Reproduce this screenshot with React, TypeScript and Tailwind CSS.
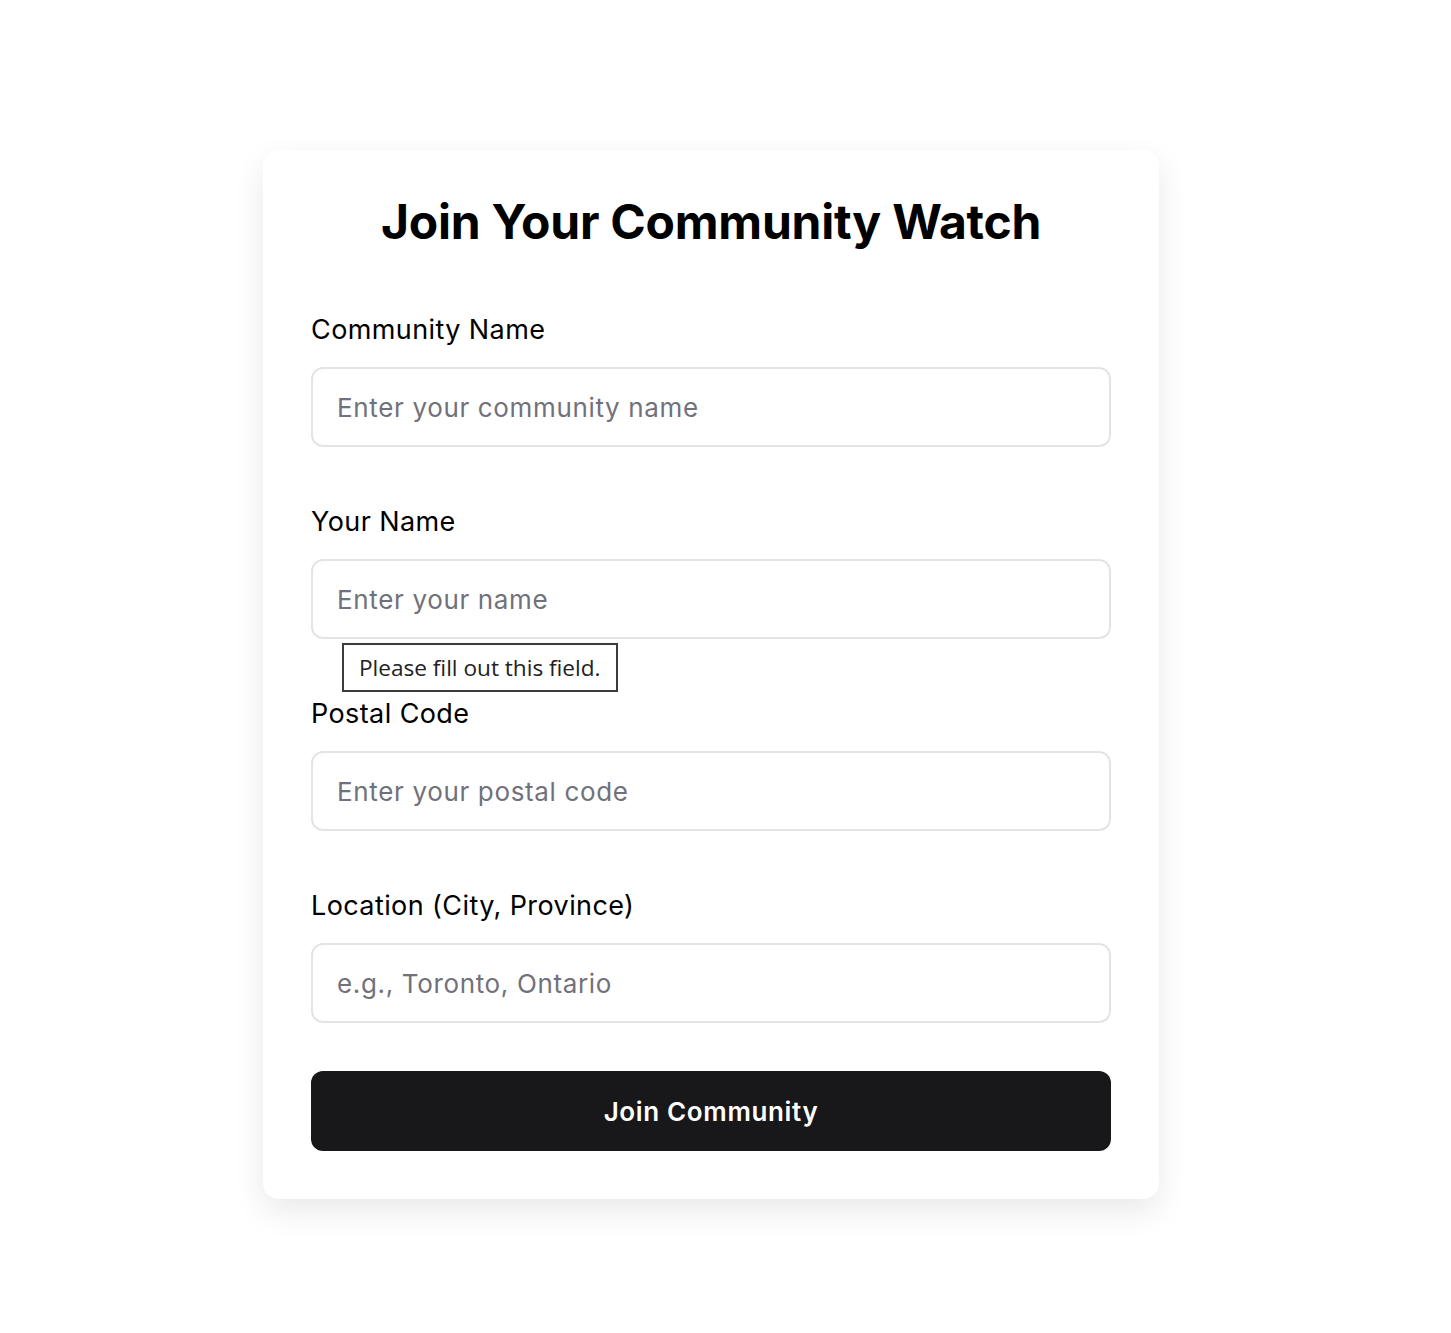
import { useState } from "react"

const fields = [
  { id: "community", label: "Community Name", placeholder: "Enter your community name" },
  { id: "name", label: "Your Name", placeholder: "Enter your name", invalid: true },
  { id: "postal", label: "Postal Code", placeholder: "Enter your postal code" },
  { id: "location", label: "Location (City, Province)", placeholder: "e.g., Toronto, Ontario" },
]

export default function App() {
  const [values, setValues] = useState<Record<string, string>>({})

  return (
    <div className="min-h-[1333px] bg-white pl-[263px] pt-[150px] font-['Inter',sans-serif]">
      <div className="w-[896px] rounded-2xl bg-white p-12 shadow-[0_12px_32px_rgba(0,0,0,0.09)]">
        <h1 className="text-center text-5xl leading-[48px] font-bold tracking-[-0.005em] text-black">
          Join Your Community Watch
        </h1>

        <form className="mt-[68px] flex flex-col" onSubmit={(e) => e.preventDefault()}>
          {fields.map((f) => (
            <div key={f.id} className="relative mb-[59px] flex flex-col">
              <label
                htmlFor={f.id}
                className="mb-[21px] text-[27px] leading-8 font-normal tracking-[0.015em] text-black"
              >
                {f.label}
              </label>
              <input
                id={f.id}
                value={values[f.id] ?? ""}
                onChange={(e) => setValues({ ...values, [f.id]: e.target.value })}
                placeholder={f.placeholder}
                className="h-20 w-full rounded-xl border-2 border-zinc-200 bg-white px-6 text-[26px] tracking-[0.025em] text-black outline-none placeholder:text-zinc-500"
              />
              {f.invalid && (
                <div className="absolute top-[calc(100%+4px)] left-[31px] z-10 border-2 border-[#3c3c3c] bg-white px-[15px] py-[7px] font-['Open_Sans',sans-serif] text-[22.6px] leading-[31px] text-[#222]">
                  Please fill out this field.
                </div>
              )}
            </div>
          ))}

          <button
            type="submit"
            className="-mt-[11px] h-20 w-full rounded-xl bg-zinc-900 text-[26px] font-semibold tracking-[0.025em] text-white"
          >
            Join Community
          </button>
        </form>
      </div>
    </div>
  )
}
